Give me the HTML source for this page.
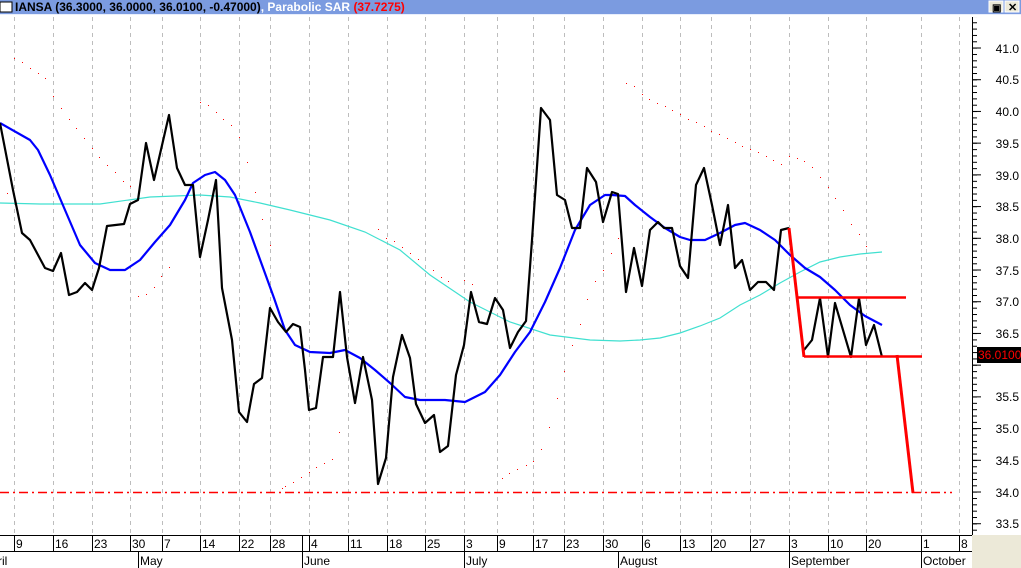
<!DOCTYPE html>
<html><head><meta charset="utf-8"><style>
body{margin:0;width:1021px;height:568px;overflow:hidden;background:#fff;font-family:"Liberation Sans",sans-serif}
</style></head><body>
<svg width="1021" height="568" viewBox="0 0 1021 568" xmlns="http://www.w3.org/2000/svg" style="position:absolute;left:0;top:0">
<defs>
<pattern id="mn" patternUnits="userSpaceOnUse" x="0" y="28.6" width="20" height="6.343"><rect x="0" y="0" width="20" height="1" fill="#000"/></pattern>
<pattern id="mj" patternUnits="userSpaceOnUse" x="0" y="47.5" width="20" height="31.715"><rect x="0" y="0" width="20" height="1" fill="#000"/></pattern>
</defs>
<rect x="0" y="0" width="1021" height="14" fill="#7b9be0"/>
<rect x="0" y="14" width="1021" height="1" fill="#e8eefc"/>
<rect x="0" y="2" width="12" height="10" fill="#fff" stroke="#000" stroke-width="1"/>
<text x="15" y="11" font-size="12" font-weight="bold" fill="#000" font-family="Liberation Sans,sans-serif">IANSA (36.3000, 36.0000, 36.0100, -0.47000)<tspan fill="#fff">, Parabolic SAR </tspan><tspan fill="#ff0000">(37.7275)</tspan></text>
<rect x="989" y="1" width="14" height="11" fill="#ece9d8" stroke="#fff"/>
<rect x="1005" y="1" width="14" height="11" fill="#ece9d8" stroke="#fff"/>
<text x="992" y="11" font-size="10" font-weight="bold">&#x25A3;</text>
<text x="1008" y="11" font-size="11" font-weight="bold">✕</text>
<g stroke="#bdbdbd" stroke-dasharray="4,4" stroke-width="1">
<path d="M14.5 17V535M53.5 17V535M92.5 17V535M130.5 17V535M162.5 17V535M200.5 17V535M239.5 17V535M270.5 17V535M309.5 17V535M348.5 17V535M387.5 17V535M425.5 17V535M464.5 17V535M497.5 17V535M533.5 17V535M564.5 17V535M603.5 17V535M642.5 17V535M680.5 17V535M711.5 17V535M750.5 17V535M789.5 17V535M828.5 17V535M866.5 17V535M921.5 17V535M959.5 17V535"/>
</g>
<path d="M0 492.5H952" stroke="#ff0000" stroke-width="1.5" stroke-dasharray="9,4,2,4"/>
<g fill="#ff0000">
<rect x="14" y="58" width="1" height="1"/><rect x="22" y="62" width="1" height="1"/><rect x="30" y="68" width="1" height="1"/><rect x="38" y="73" width="1" height="1"/><rect x="45" y="78" width="1" height="1"/><rect x="53" y="96" width="1" height="1"/><rect x="61" y="108" width="1" height="1"/><rect x="69" y="119" width="1" height="1"/><rect x="76" y="128" width="1" height="1"/><rect x="84" y="138" width="1" height="1"/><rect x="92" y="148" width="1" height="1"/><rect x="99" y="157" width="1" height="1"/><rect x="107" y="165" width="1" height="1"/><rect x="115" y="172" width="1" height="1"/><rect x="123" y="181" width="1" height="1"/><rect x="130" y="186" width="1" height="1"/>
<rect x="7" y="193" width="1" height="1"/>
<rect x="200" y="102" width="1" height="1"/><rect x="208" y="105" width="1" height="1"/><rect x="216" y="112" width="1" height="1"/><rect x="223" y="119" width="1" height="1"/><rect x="231" y="125" width="1" height="1"/><rect x="239" y="137" width="1" height="1"/><rect x="247" y="162" width="1" height="1"/><rect x="255" y="192" width="1" height="1"/><rect x="262" y="219" width="1" height="1"/><rect x="270" y="245" width="1" height="1"/>
<rect x="138" y="296" width="1" height="1"/><rect x="146" y="294" width="1" height="1"/><rect x="154" y="287" width="1" height="1"/><rect x="161" y="276" width="1" height="1"/><rect x="169" y="267" width="1" height="1"/>
<rect x="282" y="488" width="1" height="1"/><rect x="285" y="486" width="1" height="1"/><rect x="293" y="482" width="1" height="1"/><rect x="301" y="477" width="1" height="1"/><rect x="309" y="472" width="1" height="1"/><rect x="316" y="467" width="1" height="1"/><rect x="324" y="463" width="1" height="1"/><rect x="332" y="459" width="1" height="1"/><rect x="339" y="432" width="1" height="1"/>
<rect x="378" y="229" width="1" height="1"/><rect x="386" y="238" width="1" height="1"/><rect x="394" y="241" width="1" height="1"/><rect x="402" y="247" width="1" height="1"/><rect x="410" y="253" width="1" height="1"/><rect x="418" y="259" width="1" height="1"/><rect x="433" y="270" width="1" height="1"/><rect x="441" y="277" width="1" height="1"/><rect x="448" y="281" width="1" height="1"/><rect x="464" y="280" width="1" height="1"/><rect x="472" y="284" width="1" height="1"/>
<rect x="502" y="478" width="1" height="1"/><rect x="509" y="473" width="1" height="1"/><rect x="517" y="469" width="1" height="1"/><rect x="526" y="465" width="1" height="1"/><rect x="533" y="461" width="1" height="1"/><rect x="541" y="449" width="1" height="1"/><rect x="549" y="427" width="1" height="1"/><rect x="557" y="398" width="1" height="1"/><rect x="564" y="371" width="1" height="1"/><rect x="572" y="345" width="1" height="1"/><rect x="580" y="324" width="1" height="1"/><rect x="587" y="299" width="1" height="1"/><rect x="595" y="281" width="1" height="1"/><rect x="603" y="270" width="1" height="1"/><rect x="611" y="253" width="1" height="1"/><rect x="618" y="238" width="1" height="1"/>
<rect x="626" y="83" width="1" height="1"/><rect x="634" y="86" width="1" height="1"/><rect x="642" y="94" width="1" height="1"/><rect x="649" y="99" width="1" height="1"/><rect x="657" y="103" width="1" height="1"/><rect x="665" y="106" width="1" height="1"/><rect x="672" y="110" width="1" height="1"/><rect x="680" y="114" width="1" height="1"/><rect x="688" y="119" width="1" height="1"/><rect x="696" y="122" width="1" height="1"/><rect x="704" y="126" width="1" height="1"/><rect x="711" y="131" width="1" height="1"/><rect x="719" y="134" width="1" height="1"/><rect x="727" y="138" width="1" height="1"/><rect x="735" y="142" width="1" height="1"/><rect x="742" y="146" width="1" height="1"/><rect x="750" y="149" width="1" height="1"/><rect x="758" y="152" width="1" height="1"/><rect x="766" y="156" width="1" height="1"/><rect x="773" y="160" width="1" height="1"/><rect x="781" y="164" width="1" height="1"/><rect x="789" y="156" width="1" height="1"/><rect x="797" y="158" width="1" height="1"/><rect x="804" y="161" width="1" height="1"/><rect x="812" y="167" width="1" height="1"/><rect x="820" y="177" width="1" height="1"/><rect x="828" y="187" width="1" height="1"/><rect x="835" y="198" width="1" height="1"/><rect x="843" y="210" width="1" height="1"/><rect x="851" y="224" width="1" height="1"/><rect x="859" y="234" width="1" height="1"/><rect x="866" y="246" width="1" height="1"/>
</g>
<polyline fill="none" stroke="#40e0d0" stroke-width="1.2" points="0,203 40,204 100,204 150,197 200,195 230,197 260,203 290,210 330,220 365,232 400,250 430,275 470,302 510,322 550,335 590,340 620,341 640,340 660,338 680,333 700,326 720,318 740,305 760,295 780,283 800,272 820,262 840,257 860,254 882,252"/>
<polyline fill="none" stroke="#0000ff" stroke-width="2.2" stroke-linejoin="round" points="0,123 30,140 38,150 50,175 65,210 80,245 95,263 110,270 125,270 140,260 155,242 170,225 185,200 193,183 205,175 215,172 225,180 235,195 250,232 262,265 274,298 285,330 295,345 310,352 330,353 345,350 360,358 375,370 390,383 405,397 420,400 445,400 465,402 485,392 500,375 515,352 530,332 545,302 560,268 575,230 590,205 605,195 612,195 625,196 635,205 650,217 665,228 680,237 690,240 705,240 720,233 735,225 745,223 760,230 775,240 790,255 805,268 820,277 835,290 850,305 865,316 882,325"/>
<polyline fill="none" stroke="#000" stroke-width="2.2" stroke-linejoin="round" points="0,123 13,190 22,233 30,240 45,268 53,271 61,253 69,295 77,292 85,283 92,290 99,268 107,226 124,224 130,204 138,200 146,143 154,180 169,115 177,168 185,185 193,185 200,257 208,220 216,180 222,288 232,340 239,412 247,422 254,384 262,378 270,308 278,322 286,332 293,324 300,327 305,370 309,410 316,408 323,357 333,357 340,292 347,357 355,403 363,357 372,400 378,484 386,458 393,377 402,335 410,358 416,404 425,423 434,415 440,452 448,446 456,375 464,345 471,292 479,322 487,324 495,298 503,310 510,348 518,332 526,321 532,240 541,108 550,120 557,195 565,200 572,228 580,228 587,168 596,182 603,222 612,192 618,194 626,292 634,248 642,286 650,230 658,222 664,228 672,228 680,266 688,278 696,185 704,168 712,205 720,245 728,205 735,268 742,260 750,290 758,282 766,282 774,290 781,230 789,228"/>
<polyline fill="none" stroke="#000" stroke-width="2.2" stroke-linejoin="round" points="804,350 812,340 820,298 828,357 835,303 851,357 859,298 866,345 874,325 882,357"/>
<g stroke="#ff0000" fill="none">
<path d="M789 228L804 357" stroke-width="3"/>
<path d="M804 356.5H922" stroke-width="2.5"/>
<path d="M797 297.5H906" stroke-width="2.5"/>
<path d="M897 355L913 493" stroke-width="3"/>
</g>
<rect x="972" y="17" width="1" height="518" fill="#000"/>
<rect x="972" y="17" width="5" height="518" fill="url(#mn)"/>
<rect x="972" y="17" width="9" height="518" fill="url(#mj)"/>
<g font-size="12" fill="#000" text-anchor="end">
<text x="1019" y="53">41.0</text><text x="1019" y="84">40.5</text><text x="1019" y="116">40.0</text><text x="1019" y="148">39.5</text><text x="1019" y="180">39.0</text><text x="1019" y="211">38.5</text><text x="1019" y="243">38.0</text><text x="1019" y="275">37.5</text><text x="1019" y="306">37.0</text><text x="1019" y="338">36.5</text><text x="1019" y="401">35.5</text><text x="1019" y="433">35.0</text><text x="1019" y="465">34.5</text><text x="1019" y="497">34.0</text><text x="1019" y="528">33.5</text>
</g>
<rect x="977" y="347" width="44" height="16" fill="#000"/>
<text x="978" y="359" font-size="12" fill="#ff0000">36.01000</text>
<rect x="0" y="535" width="972" height="1" fill="#000"/>
<rect x="0" y="551" width="972" height="1" fill="#000"/>
<rect x="972" y="535" width="49" height="33" fill="#ece9d8"/>
<g stroke="#000" stroke-width="1">
<path d="M14.5 535V551M53.5 535V551M92.5 535V551M130.5 535V551M162.5 535V551M200.5 535V551M239.5 535V551M270.5 535V551M302.5 535V551M309.5 535V551M348.5 535V551M387.5 535V551M425.5 535V551M464.5 535V551M497.5 535V551M533.5 535V551M564.5 535V551M603.5 535V551M642.5 535V551M680.5 535V551M711.5 535V551M750.5 535V551M789.5 535V551M828.5 535V551M866.5 535V551M921.5 535V551M959.5 535V551"/>
<path d="M138.5 551V568M302.5 551V568M464.5 551V568M618.5 551V568M789.5 551V568M921.5 551V568"/>
</g>
<g font-size="12" fill="#000">
<text x="16" y="548">9</text><text x="55" y="548">16</text><text x="94" y="548">23</text><text x="132" y="548">30</text><text x="164" y="548">7</text><text x="202" y="548">14</text><text x="241" y="548">22</text><text x="272" y="548">28</text><text x="311" y="548">4</text><text x="350" y="548">11</text><text x="389" y="548">18</text><text x="427" y="548">25</text><text x="466" y="548">3</text><text x="499" y="548">9</text><text x="535" y="548">17</text><text x="566" y="548">23</text><text x="605" y="548">30</text><text x="644" y="548">6</text><text x="682" y="548">13</text><text x="713" y="548">20</text><text x="752" y="548">27</text><text x="791" y="548">3</text><text x="830" y="548">10</text><text x="868" y="548">20</text><text x="923" y="548">1</text><text x="961" y="548">8</text>
<text x="-2" y="565">ril</text><text x="140" y="565">May</text><text x="304" y="565">June</text><text x="466" y="565">July</text><text x="620" y="565">August</text><text x="791" y="565">September</text><text x="923" y="565">October</text>
</g>
</svg>
</body></html>
